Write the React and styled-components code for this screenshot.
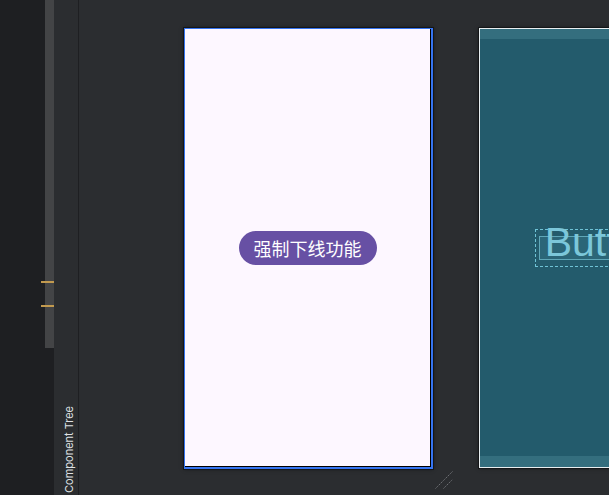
import React from "react";
import styled, { createGlobalStyle } from "styled-components";

const Global = createGlobalStyle`
  html, body { margin: 0; padding: 0; background: #2b2d30; }
  body { overflow: hidden; }
`;

const Shell = styled.div`
  display: flex;
  width: 609px;
  height: 495px;
  overflow: hidden;
  background: #2b2d30;
  font-family: Inter, "Noto Sans", sans-serif;
`;

const SidePanel = styled.div`
  position: relative;
  width: 54px;
  flex-shrink: 0;
  background: #1e1f22;
  display: flex;
  justify-content: flex-end;
`;

const Thumb = styled.div`
  width: 9px;
  height: 348px;
  background: #434446;
`;

const Mark = styled.div`
  position: absolute;
  left: 41px;
  top: ${(p) => p.$top}px;
  width: 13px;
  height: 2px;
  background: #c29a4f;
`;

const ToolStrip = styled.div`
  width: 25px;
  flex-shrink: 0;
  background: #2b2d30;
  border-right: 1px solid #1e1f22;
  display: flex;
  flex-direction: column;
  justify-content: flex-end;
  align-items: center;
  padding-bottom: 2px;
  box-sizing: border-box;
`;

const StripLabel = styled.span`
  writing-mode: vertical-rl;
  transform: rotate(180deg);
  font-size: 11px;
  color: #dfe1e5;
  white-space: nowrap;
  margin-left: 5px;
`;

const Canvas = styled.div`
  flex: 1;
  display: flex;
  align-items: flex-start;
  gap: 46px;
  padding: 28px 0 0 105px;
  overflow: hidden;
`;

const PhoneColumn = styled.div`
  display: flex;
  flex-direction: column;
  align-items: flex-end;
  flex-shrink: 0;
`;

const Frame = styled.div`
  border: 1px solid #3574f0;
  border-width: 1px 2px 2px 1px;
  box-shadow: 0 0 0 1px #151618, 0 0 4px rgba(0, 0, 0, 0.6);
`;

const Screen = styled.div`
  width: 245px;
  height: 437px;
  background: #fdf7ff;
  border-right: 1px solid #000;
  border-bottom: 1px solid #000;
  display: flex;
  align-items: center;
  justify-content: center;
`;

const PillButton = styled.button`
  height: 34px;
  padding: 0 15px;
  border: none;
  border-radius: 17px;
  background: #6750a4;
  color: #fff;
  font-family: "Noto Sans CJK SC", "Noto Sans", sans-serif;
  font-size: 18px;
  line-height: 34px;
  margin-top: 1px;
`;

const Grip = styled.svg`
  margin-top: 2px;
  margin-right: -20px;
`;

const Blueprint = styled.div`
  flex-shrink: 0;
  width: 248px;
  height: 438px;
  border: 1px solid #e8eef0;
  border-right: none;
  box-shadow: 0 0 0 1px #151618, 0 0 4px rgba(0, 0, 0, 0.6);
  background: #235b6c;
  display: flex;
  flex-direction: column;
`;

const Band = styled.div`
  height: ${(p) => p.$h}px;
  background: #346e7e;
`;

const BlueBody = styled.div`
  flex: 1;
  display: flex;
  align-items: center;
  justify-content: center;
  padding-top: 1px;
`;

const GhostButton = styled.div`
  position: relative;
  width: 138px;
  height: 38px;
  border: 1px dashed #6fc3d6;
  box-sizing: border-box;
  display: flex;
  align-items: center;
  justify-content: center;
`;

const GhostInner = styled.div`
  position: absolute;
  left: 3px;
  right: 3px;
  top: 6px;
  bottom: 6px;
  border: 1px solid #5fa7b8;
  background: rgba(110, 190, 210, 0.12);
`;

const GhostText = styled.span`
  position: relative;
  top: -6px;
  font-family: "Liberation Sans", Arial, sans-serif;
  font-size: 41px;
  line-height: 41px;
  color: #7cc7da;
  white-space: nowrap;
`;

export default function App() {
  return (
    <>
      <Global />
      <Shell>
        <SidePanel>
          <Thumb />
          <Mark $top={281} />
          <Mark $top={305} />
        </SidePanel>
        <ToolStrip>
          <StripLabel>Component Tree</StripLabel>
        </ToolStrip>
        <Canvas>
          <PhoneColumn>
            <Frame>
              <Screen>
                <PillButton>强制下线功能</PillButton>
              </Screen>
            </Frame>
            <Grip width="18" height="18" viewBox="0 0 18 18">
              <line x1="0.5" y1="17.5" x2="17.5" y2="0.5" stroke="#727478" strokeWidth="1" strokeDasharray="1.5 1" />
              <line x1="8.5" y1="17.5" x2="17.5" y2="8.5" stroke="#727478" strokeWidth="1" strokeDasharray="1.5 1" />
            </Grip>
          </PhoneColumn>
          <Blueprint>
            <Band $h={10} />
            <BlueBody>
              <GhostButton>
                <GhostInner />
                <GhostText>Button</GhostText>
              </GhostButton>
            </BlueBody>
            <Band $h={11} />
          </Blueprint>
        </Canvas>
      </Shell>
    </>
  );
}
